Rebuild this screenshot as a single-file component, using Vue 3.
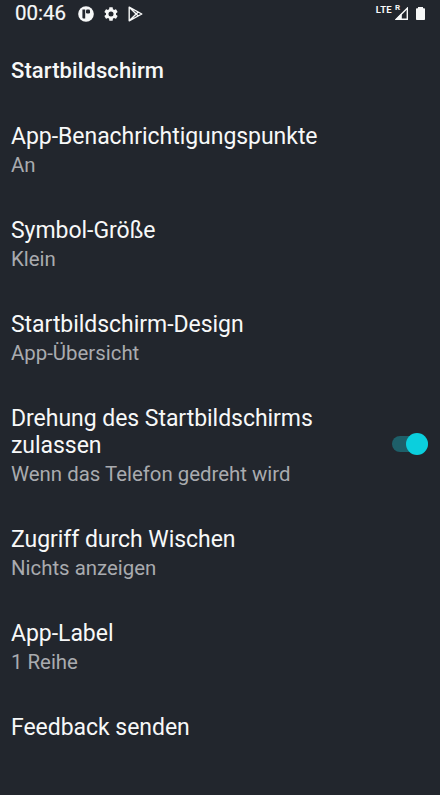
<template>
  <div class="screen">
    <header class="status-bar">
      <span class="clock">00:46</span>
      <svg class="status-icon app-icon" viewBox="0 0 16 16">
        <circle cx="8" cy="8" r="7.8" fill="currentColor"/>
        <path d="M4.400 3.500h2.800v9H5.400a1 1 0 01-1-1z" fill="#22262d"/>
        <rect x="8" y="3.500" width="4" height="4" rx="1.300" fill="#22262d"/>
      </svg>
      <svg class="status-icon gear-icon" viewBox="2 2 20 20">
        <path fill="currentColor" d="M19.14 12.94c.04-.3.06-.61.06-.94 0-.32-.02-.64-.07-.94l2.03-1.58c.18-.14.23-.41.12-.61l-1.92-3.32c-.12-.22-.37-.29-.59-.22l-2.39.96c-.5-.38-1.03-.7-1.62-.94l-.36-2.54c-.04-.24-.24-.41-.48-.41h-3.84c-.24 0-.43.17-.47.41l-.36 2.54c-.59.24-1.13.57-1.62.94l-2.39-.96c-.22-.08-.47 0-.59.22L2.74 8.87c-.12.21-.08.47.12.61l2.03 1.58c-.05.3-.09.63-.09.94s.02.64.07.94l-2.03 1.58c-.18.14-.23.41-.12.61l1.92 3.32c.12.22.37.29.59.22l2.39-.96c.5.38 1.03.7 1.62.94l.36 2.54c.05.24.24.41.48.41h3.84c.24 0 .44-.17.47-.41l.36-2.54c.59-.24 1.13-.56 1.62-.94l2.39.96c.22.08.47 0 .59-.22l1.92-3.32c.12-.22.07-.47-.12-.61l-2.01-1.58zM12 15.6a3.6 3.6 0 110-7.2 3.6 3.6 0 010 7.2z"/>
      </svg>
      <svg class="status-icon play-icon" viewBox="0 0 15 16" fill="none" stroke="currentColor" stroke-width="1.4" stroke-linejoin="round">
        <path d="M1.2 1.2v13.6L13.8 8zM1.2 1.2l8.8 8.6M1.2 14.8L10 6.2"/>
      </svg>
      <div class="network">
        <span class="network-type">LTE</span>
        <div class="signal">
          <span class="roaming">R</span>
          <svg class="signal-icon" viewBox="0 0 13 13">
            <path d="M12.3 1.2v11.1H1.200z" fill="none" stroke="currentColor" stroke-width="1.4"/>
            <path d="M6.8 6v6.6H.5z" fill="currentColor"/>
          </svg>
        </div>
        <svg class="battery-icon" viewBox="0 0 9 13">
          <path d="M2 0h5v1.200h1.200a.8.8 0 01.8.8v10.200a.8.8 0 01-.8.8H.8a.8.8 0 01-.8-.8V2a.8.8 0 01.8-.8H2z" fill="currentColor"/>
        </svg>
      </div>
    </header>

    <h1 class="category">Startbildschirm</h1>

    <ul class="settings">
      <li v-for="item in items" :key="item.title" class="setting">
        <div class="setting-text">
          <div class="setting-title">{{ item.title }}</div>
          <div class="setting-summary">{{ item.summary }}</div>
        </div>
        <button
          v-if="item.toggle"
          class="switch"
          :class="{ on: rotation }"
          role="switch"
          :aria-checked="rotation"
          :aria-label="item.title"
          @click="rotation = !rotation"
        >
          <span class="thumb"></span>
        </button>
      </li>
    </ul>
  </div>
</template>

<script setup>
import { ref } from 'vue';

const rotation = ref(true);

const items = [
  { title: 'App-Benachrichtigungspunkte', summary: 'An' },
  { title: 'Symbol-Größe', summary: 'Klein' },
  { title: 'Startbildschirm-Design', summary: 'App-Übersicht' },
  { title: 'Drehung des Startbildschirms zulassen', summary: 'Wenn das Telefon gedreht wird', toggle: true },
  { title: 'Zugriff durch Wischen', summary: 'Nichts anzeigen' },
  { title: 'App-Label', summary: '1 Reihe' },
  { title: 'Feedback senden', summary: '' },
];
</script>

<style>
body {
  background: #22262d;
}
</style>

<style scoped>
.screen {
  height: 795px;
  overflow: hidden;
  background: #22262d;
  color: #f7f8f8;
  font-family: Roboto, sans-serif;
}

.status-bar {
  display: flex;
  align-items: center;
  height: 27px;
  padding: 0 15px;
}

.clock {
  width: 51px;
  font-size: 20.5px;
  line-height: 27px;
  -webkit-text-stroke: 0.2px currentColor;
}

.status-icon {
  flex: none;
}

.app-icon {
  width: 16px;
  height: 16px;
  margin-left: 12px;
}

.gear-icon {
  width: 14px;
  height: 14px;
  margin-left: 10px;
}

.play-icon {
  width: 15px;
  height: 16px;
  margin-left: 10px;
}

.network {
  display: flex;
  align-items: flex-start;
  height: 14px;
  margin-left: auto;
}

.network-type {
  font-size: 9.5px;
  font-weight: 700;
  letter-spacing: 0.3px;
  line-height: 5px;
}

.signal {
  position: relative;
  margin: 0 8px 0 3px;
}

.roaming {
  position: absolute;
  top: -2px;
  left: 0;
  font-size: 8px;
  font-weight: 700;
  line-height: 6px;
}

.signal-icon {
  display: block;
  width: 13px;
  height: 13px;
}

.battery-icon {
  width: 9px;
  height: 13px;
}

.category {
  margin: 0;
  padding: 31px 11px 17px;
  font-size: 22px;
  font-weight: 500;
  letter-spacing: 0.09px;
  line-height: 26px;
}

.settings {
  margin: 0;
  padding: 0;
  list-style: none;
}

.setting {
  display: flex;
  align-items: center;
  justify-content: space-between;
  padding: 0 12px 0 11px;
}

.setting-text {
  width: 320px;
  padding: 22px 0 17px;
}

.setting-title {
  font-size: 23px;
  letter-spacing: -0.04px;
  line-height: 27px;
}

.setting-summary {
  height: 26px;
  padding-top: 2px;
  font-size: 20.4px;
  line-height: 26px;
  color: #a9abaf;
}

.switch {
  display: flex;
  align-items: center;
  width: 36px;
  height: 16px;
  padding: 0;
  border: 0;
  border-radius: 8px;
  background: #50545b;
}

.thumb {
  flex: none;
  width: 22px;
  height: 22px;
  border-radius: 50%;
  background: #b9bbbe;
}

.switch.on {
  justify-content: flex-end;
  background: #1e5f69;
}

.switch.on .thumb {
  background: #0bcfdd;
}
</style>
